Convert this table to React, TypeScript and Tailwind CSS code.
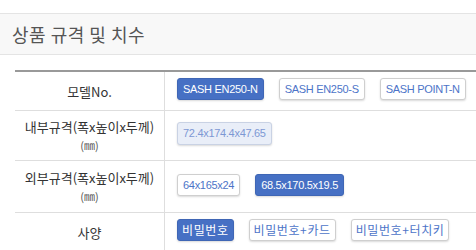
import React from "react";

const font = { fontFamily: '"Liberation Sans", "Noto Sans CJK KR", sans-serif' };
const krFont = { fontFamily: '"Noto Sans CJK KR", "Noto Sans", sans-serif' };

type Opt = { label: string; active?: boolean; soft?: boolean; spaced?: boolean };

const rows: { title: string; sub?: string; h: string; pt: string; opts: Opt[] }[] = [
  {
    title: "모델No.",
    h: "h-[38px]",
    pt: "pt-[6px]",
    opts: [
      { label: "SASH EN250-N", active: true },
      { label: "SASH EN250-S" },
      { label: "SASH POINT-N" },
    ],
  },
  {
    title: "내부규격(폭x높이x두께)",
    sub: "(㎜)",
    h: "h-[49px]",
    pt: "pt-[11px]",
    opts: [{ label: "72.4x174.4x47.65", soft: true }],
  },
  {
    title: "외부규격(폭x높이x두께)",
    sub: "(㎜)",
    h: "h-[51px]",
    pt: "pt-[13px]",
    opts: [{ label: "64x165x24" }, { label: "68.5x170.5x19.5", active: true }],
  },
  {
    title: "사양",
    h: "h-[38px]",
    pt: "pt-[6px]",
    opts: [
      { label: "비밀번호", active: true, spaced: true },
      { label: "비밀번호+카드", spaced: true },
      { label: "비밀번호+터치키", spaced: true },
    ],
  },
];

const OptButton = ({ opt }: { opt: Opt }) => {
  const base =
    "h-[22px] flex items-center rounded-[3px] leading-none whitespace-nowrap shadow-[0_1px_2px_rgba(0,0,0,0.15)]";
  const look = opt.active
    ? "bg-[#4670c4] border border-[#3f66b5] text-white"
    : opt.soft
    ? "bg-[#e9eef8] border border-[#c9d2e4] text-[#7d98d4] h-[23px]"
    : "bg-white border border-[#cfcfcf] text-[#4d74c8]";
  const size = opt.spaced
    ? "text-[12px] tracking-[0.6px] px-[4px]"
    : "text-[11px] tracking-[-0.3px] px-[5px]";
  return (
    <div className={`${base} ${look} ${size}`} style={opt.spaced ? krFont : undefined}>
      {opt.label}
    </div>
  );
};

export default function App() {
  return (
    <div className="w-[476px] h-[250px] bg-white overflow-hidden" style={font}>
      <div className="h-[13px]" />
      <div className="h-[42px] bg-[#f8f8f8] border-y border-[#e4e4e4] flex items-center pl-[12px]">
        <span className="text-[18px] text-[#555] tracking-[0.5px]" style={krFont}>
          상품 규격 및 치수
        </span>
      </div>
      <div className="h-[15px]" />
      <div className="ml-[15px] border-t-2 border-[#999]">
        {rows.map((row) => (
          <div key={row.title} className="flex border-b border-[#dedede]">
            <div
              className={`w-[150px] shrink-0 ${row.h} border-r border-[#dedede] flex flex-col items-center justify-center text-[13px] text-[#333] leading-[19px]`}
              style={krFont}
            >
              <span>{row.title}</span>
              {row.sub && <span className="text-[11px] text-[#555]">{row.sub}</span>}
            </div>
            <div className={`flex-1 flex items-start gap-[15px] pl-[12px] ${row.pt}`}>
              {row.opts.map((o) => (
                <OptButton key={o.label} opt={o} />
              ))}
            </div>
          </div>
        ))}
      </div>
    </div>
  );
}
